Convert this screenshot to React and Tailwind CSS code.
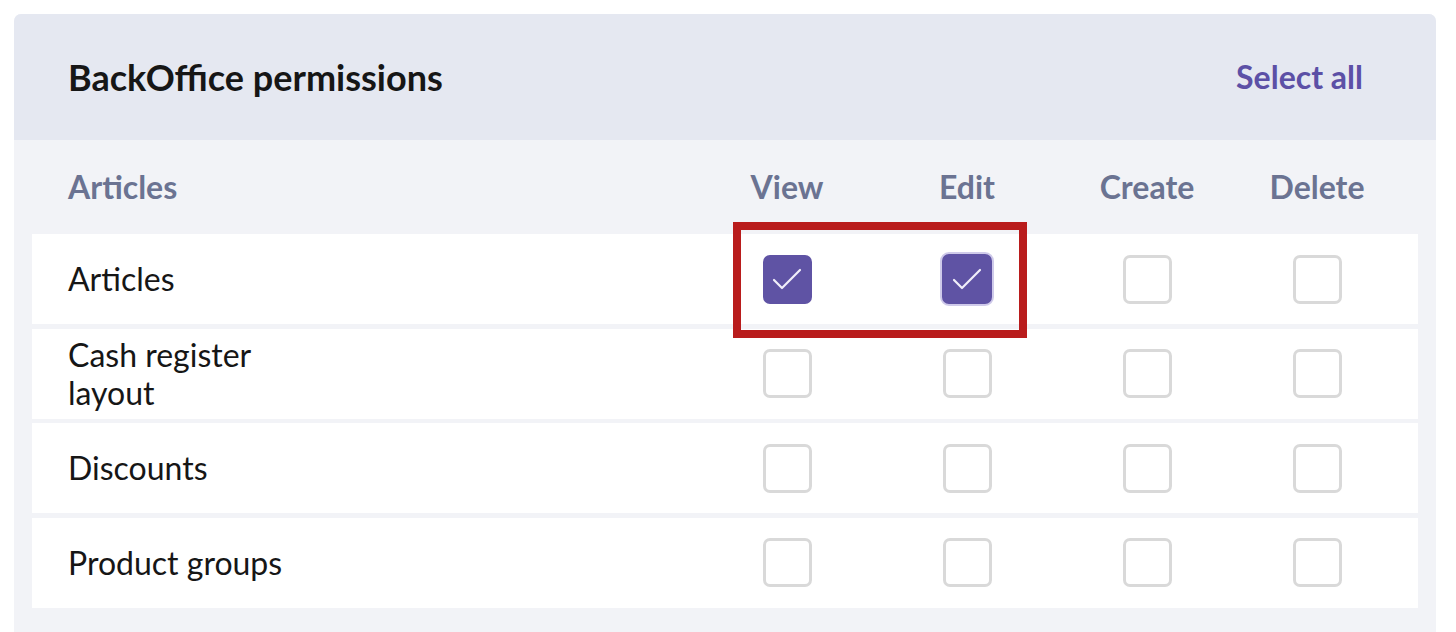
import { useState } from "react";

const columns = ["View", "Edit", "Create", "Delete"];

const initialRows = [
  { id: "articles", label: "Articles", perms: [true, true, false, false] },
  { id: "layout", label: "Cash register layout", perms: [false, false, false, false] },
  { id: "discounts", label: "Discounts", perms: [false, false, false, false] },
  { id: "groups", label: "Product groups", perms: [false, false, false, false] },
];

const Checkbox = ({ checked, focused, onChange }) => (
  <button
    type="button"
    onClick={onChange}
    className={
      checked
        ? focused
          ? "w-[54px] h-[54px] rounded-[9px] bg-[#5f53a4] border-2 border-[#cfcaea] flex items-center justify-center"
          : "w-[49px] h-[49px] rounded-[7px] bg-[#5f53a4] flex items-center justify-center"
        : "w-[49px] h-[49px] rounded-[7px] bg-white border-[3px] border-[#d9d9d9]"
    }
  >
    {checked && (
      <svg width="30" height="22" viewBox="0 0 30 22" fill="none">
        <path d="M2 12 L10 20 L28 2" stroke="#f1effa" strokeWidth="2.2" strokeLinecap="round" strokeLinejoin="round" />
      </svg>
    )}
  </button>
);

const App = () => {
  const [rows, setRows] = useState(initialRows);

  const toggle = (rowId, idx) =>
    setRows((prev) =>
      prev.map((r) =>
        r.id === rowId ? { ...r, perms: r.perms.map((p, i) => (i === idx ? !p : p)) } : r
      )
    );

  const selectAll = () => setRows((prev) => prev.map((r) => ({ ...r, perms: r.perms.map(() => true) })));

  return (
    <div className="min-h-screen bg-white pl-[14px] pt-[14px] pr-[20px] font-['Lato','Noto_Sans',sans-serif]">
      <div className="relative rounded-t-[7px] overflow-hidden bg-[#f2f3f7] pb-[40px]">
        {/* Header */}
        <div className="h-[126px] bg-[#e5e8f1] flex items-center justify-between pl-[54px] pr-[73px]">
          <h1 className="text-[36px] font-bold text-[#161616] leading-none">BackOffice permissions</h1>
          <button onClick={selectAll} className="text-[32px] font-bold text-[#5c50a6] leading-none">
            Select all
          </button>
        </div>

        <div className="px-[18px]">
          {/* Column headings */}
          <div className="h-[94px] grid grid-cols-[1fr_180px_180px_180px_160px] items-center pl-[36px] pr-[21px] text-[32px] font-bold text-[#6b7392]">
            <div>Articles</div>
            {columns.map((c) => (
              <div key={c} className="text-center">
                {c}
              </div>
            ))}
          </div>

          {/* Rows */}
          <div className="flex flex-col gap-[4.5px]">
            {rows.map((row) => (
              <div
                key={row.id}
                className="h-[90px] bg-white grid grid-cols-[1fr_180px_180px_180px_160px] items-center pl-[36px] pr-[21px]"
              >
                <div className="max-w-[240px] text-[32px] leading-[38px] text-[#161616]">{row.label}</div>
                {row.perms.map((p, i) => (
                  <div key={i} className="flex justify-center">
                    <Checkbox
                      checked={p}
                      focused={row.id === "articles" && i === 1}
                      onChange={() => toggle(row.id, i)}
                    />
                  </div>
                ))}
              </div>
            ))}
          </div>
        </div>

        {/* Highlight annotation */}
        <div className="absolute left-[719px] top-[208px] w-[294px] h-[116px] border-[8px] border-[#b91c1c] pointer-events-none" />
      </div>
    </div>
  );
};

export default App;
